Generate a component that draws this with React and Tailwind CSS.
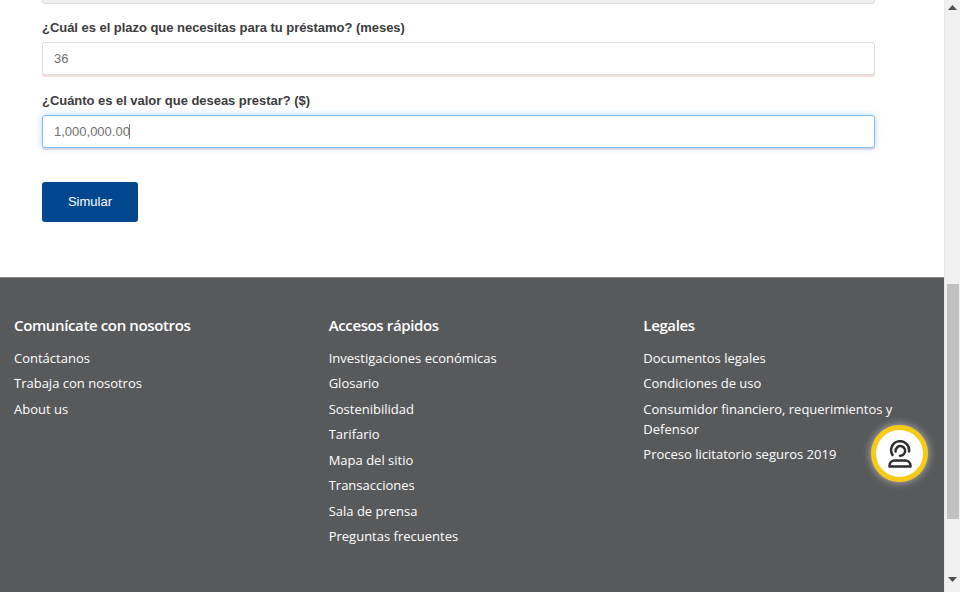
import React from "react";

const col1 = ["Contáctanos", "Trabaja con nosotros", "About us"];
const col2 = ["Investigaciones económicas", "Glosario", "Sostenibilidad", "Tarifario", "Mapa del sitio", "Transacciones", "Sala de prensa", "Preguntas frecuentes"];
const col3 = ["Documentos legales", "Condiciones de uso", "Consumidor financiero, requerimientos y Defensor", "Proceso licitatorio seguros 2019"];

function FooterCol({ title, items }) {
  return (
    <div className="w-[315px] pl-[14px] pr-[14px] pt-[36px]">
      <h4 className="text-[15px] leading-[22px] font-semibold tracking-[-0.37px] text-white mb-[12px]">{title}</h4>
      <ul className="flex flex-col gap-[5.43px]">
        {items.map((t) => (
          <li key={t} className="text-[13px] leading-[20px] text-white">{t}</li>
        ))}
      </ul>
    </div>
  );
}

function Field({ label, value, focused }) {
  return (
    <div className="mt-[17px] first:mt-0">
      <label className="block text-[13px] leading-[18px] font-bold tracking-[-0.035px] text-[#3c3c3c] mb-[5px]">{label}</label>
      <div className="relative">
        <input
          readOnly
          value={value}
          className={
            focused
              ? "block w-full h-[33px] px-[11px] rounded-[3px] border border-[#80bdff] bg-white text-[13px] text-[#707070] outline-none shadow-[0_0_6px_rgba(128,189,255,0.6),0_2px_0_#f6dede]"
              : "block w-full h-[33px] px-[11px] rounded-[3px] border border-[#dcdcdc] bg-white text-[13px] text-[#707070] outline-none shadow-[0_2px_0_#f6dede]"
          }
        />
        {focused && <span className="absolute left-[87px] top-[9px] w-px h-[15px] bg-[#777]" />}
      </div>
    </div>
  );
}

export default function App() {
  return (
    <div className="relative flex h-[592px] w-[960px] overflow-hidden bg-white font-['Liberation_Sans',sans-serif]">
      <main className="flex w-[944px] flex-col">
        <section className="h-[277px] shrink-0 pl-[42px] pr-[69px]">
          <div className="-mt-[30px] h-[34px] rounded-[3px] border border-[#dcdcdc] bg-[#eeeeee]" />
          <div className="mt-[15px]">
            <Field label="¿Cuál es el plazo que necesitas para tu préstamo? (meses)" value="36" />
            <Field label="¿Cuánto es el valor que deseas prestar? ($)" value="1,000,000.00" focused />
          </div>
          <button className="mt-[34px] h-[40px] w-[96px] rounded-[3px] bg-[#03478e] text-[13px] text-white">Simular</button>
        </section>
        <footer className="flex flex-1 border-t border-[#8a8a8a] bg-[#58595b] font-['Open_Sans',sans-serif]">
          <FooterCol title="Comunícate con nosotros" items={col1} />
          <FooterCol title="Accesos rápidos" items={col2} />
          <FooterCol title="Legales" items={col3} />
        </footer>
      </main>
      <aside className="flex w-[16px] flex-col items-center border-l border-[#e8e8e8] bg-[#f0f0f0]">
        <svg width="9" height="5" viewBox="0 0 9 5" className="mt-[5px] shrink-0"><path d="M4.5 0 9 5H0z" fill="#505050" /></svg>
        <div className="mt-[274px] h-[235px] w-[12px] shrink-0 bg-[#c1c1c1]" />
        <svg width="9" height="5" viewBox="0 0 9 5" className="mt-[58px] shrink-0"><path d="M4.5 5 9 0H0z" fill="#505050" /></svg>
      </aside>
      <button className="absolute left-[871px] top-[425px] flex h-[57px] w-[57px] items-center justify-center rounded-full border-[5px] border-[#f7cb15] bg-white shadow-[0_0_8px_rgba(255,255,255,0.6)]">
        <svg width="26" height="28" viewBox="0 0 26 28" fill="none" stroke="#2f2f2f" strokeWidth="2.5" strokeLinecap="round">
          <path d="M5.5 15A9 9 0 1 1 22 11.5" />
          <path d="M8.6 11.5A4.8 4.8 0 1 1 17 14C16 15.3 14.8 15.8 13 15.8" />
          <path d="M2.5 26.4v-.8c0-3 2.4-5.2 5.2-5.2h10.6c2.8 0 5.2 2.2 5.2 5.2v.8z" strokeLinejoin="round" />
        </svg>
      </button>
    </div>
  );
}
